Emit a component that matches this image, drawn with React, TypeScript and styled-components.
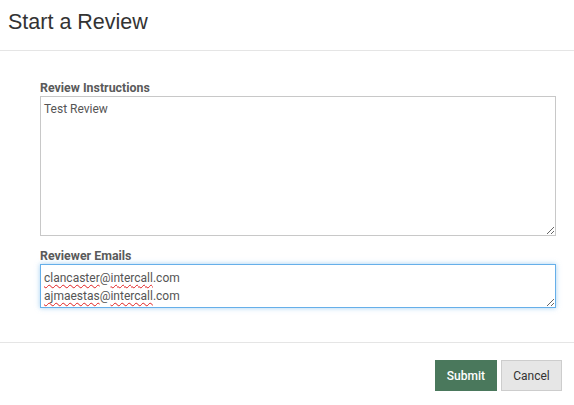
import React from 'react'
import styled, { createGlobalStyle } from 'styled-components'

const GlobalStyle = createGlobalStyle`
  html, body {
    margin: 0;
    padding: 0;
    background: #fff;
  }
  body {
    font-family: Roboto, "Liberation Sans", Arial, sans-serif;
    color: #555;
  }
`

const Modal = styled.div`
  width: 574px;
  display: flex;
  flex-direction: column;
`

const Header = styled.div`
  height: 51px;
  box-sizing: border-box;
  border-bottom: 1px solid #e5e5e5;
  padding: 0 8px;
  display: flex;
  align-items: center;
`

const Title = styled.h4`
  margin: 0 0 5px 0;
  font-family: "Liberation Sans", Arial, sans-serif;
  font-size: 21.5px;
  font-weight: normal;
  color: #333;
`

const Body = styled.div`
  padding: 30px 18px 34px 40px;
  display: flex;
  flex-direction: column;
  gap: 13px;
`

const Group = styled.div`
  display: flex;
  flex-direction: column;
`

const Label = styled.label`
  font-size: 12.4px;
  font-weight: bold;
  color: #5a5a5a;
  line-height: 14px;
  margin-bottom: 1px;
`

const TextArea = styled.textarea<{ $h: number }>`
  box-sizing: border-box;
  width: 100%;
  height: ${p => p.$h}px;
  border: 1px solid #c8c8c8;
  border-radius: 0;
  padding: 4px 3px;
  font-family: Roboto, "Liberation Sans", Arial, sans-serif;
  font-size: 12px;
  line-height: 16px;
  color: #555;
  resize: vertical;
  outline: none;
`

const Editable = styled.div<{ $h: number }>`
  box-sizing: border-box;
  width: 100%;
  height: ${p => p.$h}px;
  border: 1px solid #66afe9;
  box-shadow: 0 0 5px rgba(102, 175, 233, 0.6);
  padding: 4px 3px 0 3px;
  font-size: 12px;
  line-height: 18px;
  color: #555;
  resize: vertical;
  overflow: auto;
`

const Misspelled = styled.span`
  text-decoration: underline wavy #e02020;
  text-decoration-thickness: 1px;
  text-underline-offset: 2px;
  text-decoration-skip-ink: none;
`

const Footer = styled.div`
  border-top: 1px solid #e5e5e5;
  padding: 17px 12px;
  display: flex;
  justify-content: flex-end;
  gap: 4px;
`

const Button = styled.button<{ $primary?: boolean }>`
  height: 31px;
  box-sizing: border-box;
  padding: 0 11px;
  font-family: Roboto, "Liberation Sans", Arial, sans-serif;
  font-size: 12px;
  font-weight: ${p => (p.$primary ? 500 : 'normal')};
  color: ${p => (p.$primary ? '#fff' : '#333')};
  background: ${p => (p.$primary ? '#4a785c' : '#e6e6e6')};
  border: 1px solid ${p => (p.$primary ? '#4a785c' : '#cdcdcd')};
  border-radius: 0;
  min-width: 61px;
  cursor: pointer;
`

const App = () => {
  return (
    <>
      <GlobalStyle />
      <Modal>
        <Header>
          <Title>Start a Review</Title>
        </Header>
        <Body>
          <Group>
            <Label>Review Instructions</Label>
            <TextArea $h={140} defaultValue="Test Review" spellCheck={false} />
          </Group>
          <Group>
            <Label>Reviewer Emails</Label>
            <Editable $h={44}>
              <div><Misspelled>clancaster</Misspelled>@<Misspelled>intercall</Misspelled>.com</div>
              <div><Misspelled>ajmaestas</Misspelled>@<Misspelled>intercall</Misspelled>.com</div>
            </Editable>
          </Group>
        </Body>
        <Footer>
          <Button $primary>Submit</Button>
          <Button>Cancel</Button>
        </Footer>
      </Modal>
    </>
  )
}

export default App
